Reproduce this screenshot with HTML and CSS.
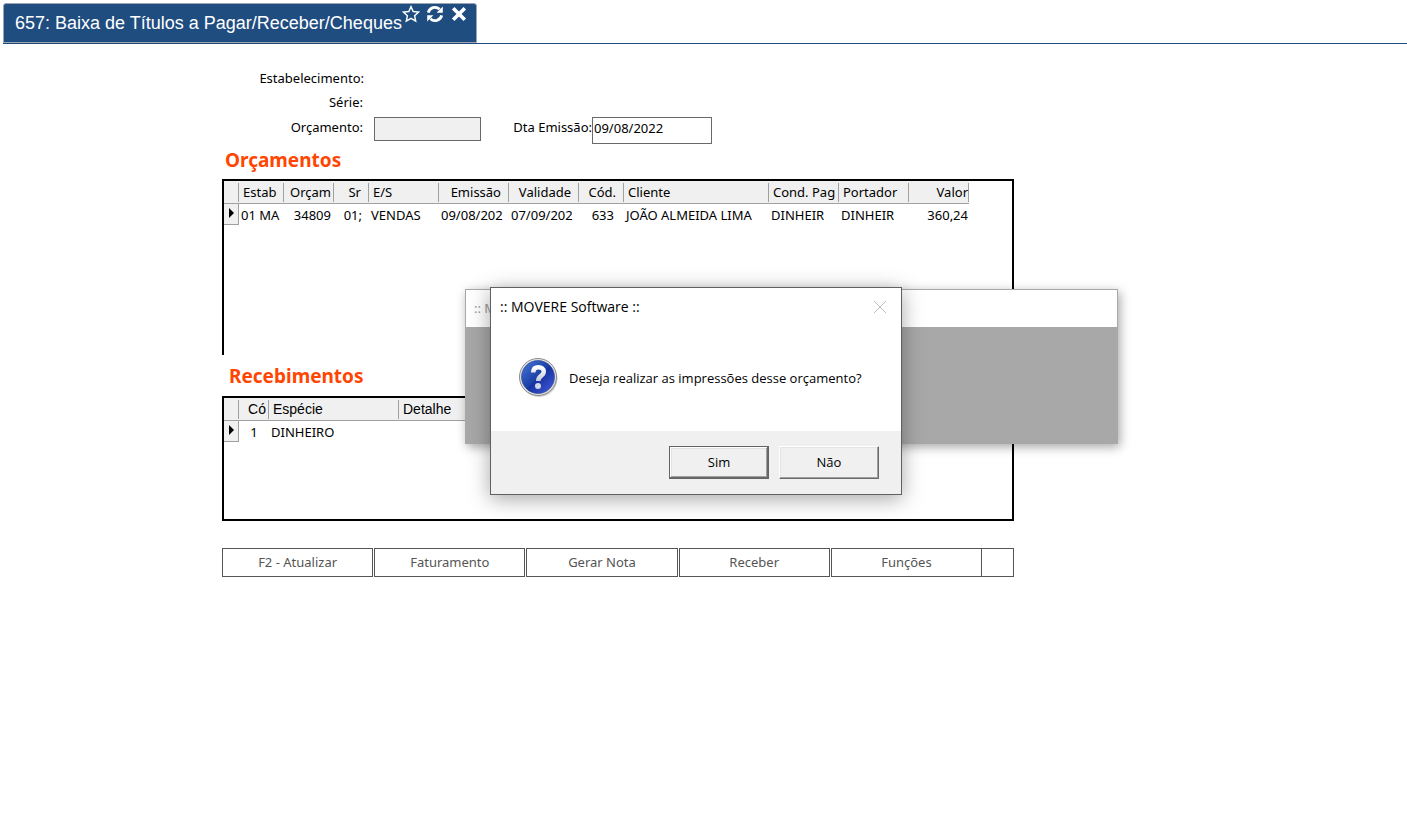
FILE: index.html
```
<!DOCTYPE html>
<html lang="pt-BR">
<head>
    <meta charset="UTF-8">
    <meta name="viewport" content="width=device-width, initial-scale=1.0">
    <title>657: Baixa de Títulos a Pagar/Receber/Cheques</title>
    <link rel="stylesheet" href="styles.css">
</head>
<body>
    <header class="topo">
        <div class="aba">
            <h1>657: Baixa de Títulos a Pagar/Receber/Cheques</h1>
            <div class="aba-acoes">
                <button type="button" aria-label="Favoritar">
                    <svg width="18" height="18" viewBox="0 0 18 18"><path d="M9 1.6l2.2 4.9 5.4.6-4 3.6 1.1 5.3L9 13.3 4.3 16l1.1-5.3-4-3.6 5.4-.6z" fill="none" stroke="#fff" stroke-width="1.4"/></svg>
                </button>
                <button type="button" aria-label="Atualizar">
                    <svg width="18" height="18" viewBox="0 0 18 18"><path d="M2.3 7.6A6.8 6.8 0 0 1 13.6 4.3M15.7 10.4A6.8 6.8 0 0 1 4.4 13.7" fill="none" stroke="#fff" stroke-width="2.8"/><path d="M16.8 1.5v6.2h-6.2zM1.2 16.5v-6.2h6.2z" fill="#fff"/></svg>
                </button>
                <button type="button" aria-label="Fechar">
                    <svg width="18" height="18" viewBox="0 0 18 18"><path d="M3.200 3.200l11.600 11.600M14.800 3.200l-11.600 11.600" fill="none" stroke="#fff" stroke-width="3.6"/></svg>
                </button>
            </div>
        </div>
    </header>

    <main class="conteudo">
        <form class="filtros">
            <div class="linha">
                <span class="rotulo longo">Estabelecimento:</span>
            </div>
            <div class="linha">
                <span class="rotulo">Série:</span>
            </div>
            <div class="linha campos">
                <label class="rotulo" for="orcamento">Orçamento:</label>
                <input id="orcamento" class="campo bloqueado" type="text" readonly>
                <label class="rotulo-data" for="emissao">Dta Emissão:</label>
                <input id="emissao" class="campo data" type="text" value="09/08/2022">
            </div>
        </form>

        <h2>Orçamentos</h2>
        <section class="painel orcamentos">
            <table class="grade">
                <colgroup>
                    <col class="c15"><col class="c45"><col class="c50"><col class="c35"><col class="c70"><col class="c70">
                    <col class="c70"><col class="c45"><col class="c145"><col class="c70"><col class="c70"><col class="c60">
                </colgroup>
                <thead>
                    <tr>
                        <th></th>
                        <th>Estab</th>
                        <th class="num">Orçam</th>
                        <th class="dir">Sr</th>
                        <th>E/S</th>
                        <th class="dir">Emissão</th>
                        <th class="dir">Validade</th>
                        <th class="dir">Cód.</th>
                        <th>Cliente</th>
                        <th>Cond. Pag</th>
                        <th>Portador</th>
                        <th class="valor">Valor</th>
                    </tr>
                </thead>
                <tbody>
                    <tr>
                        <td class="marca"><svg width="5" height="10" viewBox="0 0 5 10"><path d="M0 0l5 5-5 5z"/></svg></td>
                        <td>01 MA</td>
                        <td class="num">34809</td>
                        <td class="dir">01;</td>
                        <td>VENDAS</td>
                        <td>09/08/202</td>
                        <td>07/09/202</td>
                        <td class="dir cod">633</td>
                        <td>JOÃO ALMEIDA LIMA</td>
                        <td>DINHEIR</td>
                        <td>DINHEIR</td>
                        <td class="valor">360,24</td>
                    </tr>
                </tbody>
            </table>
        </section>

        <h2 class="recuado">Recebimentos</h2>
        <section class="painel recebimentos">
            <table class="grade arial">
                <colgroup><col class="c15"><col class="c30"><col class="c130"><col class="c145"></colgroup>
                <thead>
                    <tr>
                        <th></th>
                        <th class="num">Có</th>
                        <th>Espécie</th>
                        <th>Detalhe</th>
                    </tr>
                </thead>
                <tbody>
                    <tr>
                        <td class="marca"><svg width="5" height="10" viewBox="0 0 5 10"><path d="M0 0l5 5-5 5z"/></svg></td>
                        <td class="meio">1</td>
                        <td>DINHEIRO</td>
                        <td></td>
                    </tr>
                </tbody>
            </table>
        </section>

        <nav class="barra">
            <div class="botoes">
                <button type="button">F2 - Atualizar</button>
                <button type="button">Faturamento</button>
                <button type="button">Gerar Nota</button>
                <button type="button">Receber</button>
                <button type="button">Funções</button>
            </div>
            <button type="button" class="extra" aria-label="Mais"></button>
        </nav>
    </main>

    <div class="janela-fundo">
        <div class="janela-titulo">:: M</div>
    </div>

    <div class="dialogo" role="dialog" aria-labelledby="dialogo-titulo">
        <div class="dialogo-topo">
            <span id="dialogo-titulo">:: MOVERE Software ::</span>
            <button type="button" aria-label="Fechar">
                <svg width="14" height="14" viewBox="0 0 14 14"><path d="M1 1l12 12M13 1L1 13" fill="none" stroke="#bbb" stroke-width="1"/></svg>
            </button>
        </div>
        <div class="dialogo-corpo">
            <svg width="40" height="40" viewBox="0 0 40 40">
                <defs>
                    <linearGradient id="azul" x1="0" y1="0" x2="1" y2="1">
                        <stop offset="0" stop-color="#4a78d8"/>
                        <stop offset=".5" stop-color="#1a3fa6"/>
                        <stop offset=".52" stop-color="#1432a0"/>
                        <stop offset="1" stop-color="#4a5fe0"/>
                    </linearGradient>
                    <linearGradient id="prata" x1="0" y1="0" x2="0" y2="1">
                        <stop offset="0" stop-color="#fff"/>
                        <stop offset="1" stop-color="#c4c8d8"/>
                    </linearGradient>
                </defs>
                <circle cx="21" cy="20.500" r="18.5" fill="#000" opacity=".2"/>
                <circle cx="20" cy="19" r="18.5" fill="#e4e4e4" stroke="#8a8a8a"/>
                <circle cx="20" cy="19" r="16.5" fill="url(#azul)" stroke="#24408c" stroke-width=".6"/>
                <path d="M15.200 14.500c.1-3.800 2.300-5.200 5.200-5.200 3.300 0 5.400 1.700 5.400 4.400 0 4.200-5.600 4-5.600 9.300" fill="none" stroke="url(#prata)" stroke-width="4.600"/>
                <circle cx="20" cy="28" r="3" fill="#d4d8e4"/>
            </svg>
            <p>Deseja realizar as impressões desse orçamento?</p>
        </div>
        <div class="dialogo-rodape">
            <button type="button" class="padrao">Sim</button>
            <button type="button">Não</button>
        </div>
    </div>
</body>
</html>
```
FILE: styles.css
```
* {
    box-sizing: border-box;
}

body {
    margin: 0;
    background: #fff;
    color: #000;
    font-family: "Noto Sans", sans-serif;
    font-size: 13px;
    line-height: 20px;
}

h1, h2, p {
    margin: 0;
}

button, input {
    font: inherit;
    color: inherit;
}

/* Aba superior */
.topo {
    display: flex;
    height: 44px;
    margin-left: 3px;
    padding-top: 3px;
    border-bottom: 1px solid #204d80;
}

.aba {
    display: flex;
    width: 474px;
    padding-left: 11px;
    background: #204d80;
    border: 1px solid #9aa5b1;
    border-radius: 3px 3px 0 0;
    color: #fff;
}

.aba h1 {
    font-family: "Liberation Sans", Arial, sans-serif;
    font-size: 18px;
    font-weight: normal;
    line-height: 38px;
    white-space: nowrap;
}

.aba-acoes {
    display: flex;
    gap: 6px;
    padding-top: 1px;
}

.aba-acoes button {
    height: 18px;
    padding: 0;
    border: 0;
    background: none;
}

.aba-acoes svg {
    display: block;
}

/* Conteúdo */
.conteudo {
    margin: 22px 393px 0 222px;
}

.linha {
    display: flex;
    height: 24px;
    align-items: center;
}

.linha.campos {
    height: 30px;
    align-items: flex-start;
    padding-top: 3px;
}

.rotulo {
    width: 141px;
    text-align: right;
}

.rotulo.longo {
    width: 142px;
}

.campo {
    border: 1px solid #696969;
    border-radius: 0;
    padding: 0 1px;
}

.bloqueado {
    width: 107px;
    height: 24px;
    margin-left: 11px;
    background: #f0f0f0;
}

.rotulo-data {
    width: 111px;
    text-align: right;
    white-space: nowrap;
}

.data {
    width: 120px;
    height: 27px;
    padding-bottom: 6px;
}

h2 {
    height: 35px;
    padding: 6px 3px;
    color: #ff4500;
    font-size: 19px;
    font-weight: bold;
    line-height: 20px;
}

h2.recuado {
    height: 41px;
    padding: 11px 7px;
}

.painel {
    border: 2px solid #000;
    overflow: hidden;
}

.orcamentos {
    height: 176px;
    border-bottom: 0;
}

.recebimentos {
    height: 125px;
}

/* Grades */
.grade {
    width: 0;
    table-layout: fixed;
    border-collapse: separate;
    border-spacing: 0;
}

.c15 { width: 15px; }
.c30 { width: 30px; }
.c35 { width: 35px; }
.c45 { width: 45px; }
.c50 { width: 50px; }
.c60 { width: 60px; }
.c70 { width: 70px; }
.c130 { width: 130px; }
.c145 { width: 145px; }

.grade th, .grade td {
    overflow: hidden;
    white-space: nowrap;
    text-align: left;
}

.grade th {
    height: 23px;
    padding: 0 4px;
    background: linear-gradient(#a0a0a0, #a0a0a0) right center / 1px 19px no-repeat #f0f0f0;
    border-bottom: 1px solid #a0a0a0;
    font-weight: normal;
}

.grade td {
    height: 21px;
    padding: 0 2px;
}

.grade .marca {
    padding: 0 5px;
    background: #f0f0f0;
    border-right: 1px solid #a0a0a0;
    border-bottom: 1px solid #a0a0a0;
}

.marca svg {
    display: block;
    margin-bottom: 2px;
}

.grade .num {
    padding-right: 3px;
    text-align: right;
}

.grade th.dir {
    padding-right: 8px;
    text-align: right;
}

.grade td.dir {
    padding-right: 7px;
    text-align: right;
}

.grade td.cod {
    padding-right: 10px;
}

.grade .valor {
    padding-right: 1px;
    text-align: right;
}

.grade .meio {
    text-align: center;
}

.arial th {
    font-family: "Liberation Sans", Arial, sans-serif;
    font-size: 14px;
}

/* Botões inferiores */
.barra {
    display: flex;
    height: 29px;
    margin-top: 27px;
}

.barra button {
    flex: 1;
    padding: 0 0 2px;
    background: #fff;
    border: 1px solid #555;
    color: #555;
}

.botoes {
    display: flex;
    flex: 1;
    gap: 1px;
}

.barra .extra {
    flex: 0 0 32px;
    border-left: 0;
}

/* Janelas sobre a tela */
.janela-fundo, .dialogo {
    position: absolute;
}

.janela-fundo {
    left: 465px;
    top: 289px;
    width: 653px;
    height: 155px;
    background: #a8a8a8;
    border: 1px solid #a8a8a8;
    box-shadow: 2px 3px 10px rgba(0, 0, 0, 0.35);
}

.janela-titulo {
    height: 37px;
    padding-left: 8px;
    background: #fff;
    color: #999;
    line-height: 37px;
}

.dialogo {
    left: 490px;
    top: 287px;
    width: 412px;
    background: #fff;
    border: 1px solid #606060;
    box-shadow: 0 4px 20px rgba(0, 0, 0, 0.35);
    font-family: "Open Sans", "Noto Sans", sans-serif;
}

.dialogo-topo {
    display: flex;
    justify-content: space-between;
    align-items: center;
    height: 37px;
    padding: 0 14px 0 9px;
    font-size: 14px;
}

.dialogo-topo button {
    padding: 0;
    border: 0;
    background: none;
}

.dialogo-topo svg {
    display: block;
}

.dialogo-corpo {
    display: flex;
    align-items: center;
    gap: 11px;
    height: 106px;
    padding-left: 27px;
}

.dialogo-rodape {
    display: flex;
    justify-content: flex-end;
    gap: 10px;
    padding: 15px 22px;
    background: #f0f0f0;
}

.dialogo-rodape button {
    width: 100px;
    height: 33px;
    padding: 0 0 2px;
    background: #f0f0f0;
    border: 1px solid;
    border-color: #fff #696969 #696969 #fff;
    box-shadow: inset -1px -1px #a0a0a0, inset 1px 1px #e3e3e3;
}

.dialogo-rodape .padrao {
    border-color: #646464;
    box-shadow: inset -1px -1px #696969, inset 1px 1px #fff, inset -2px -2px #a0a0a0, inset 2px 2px #e3e3e3;
}
```
